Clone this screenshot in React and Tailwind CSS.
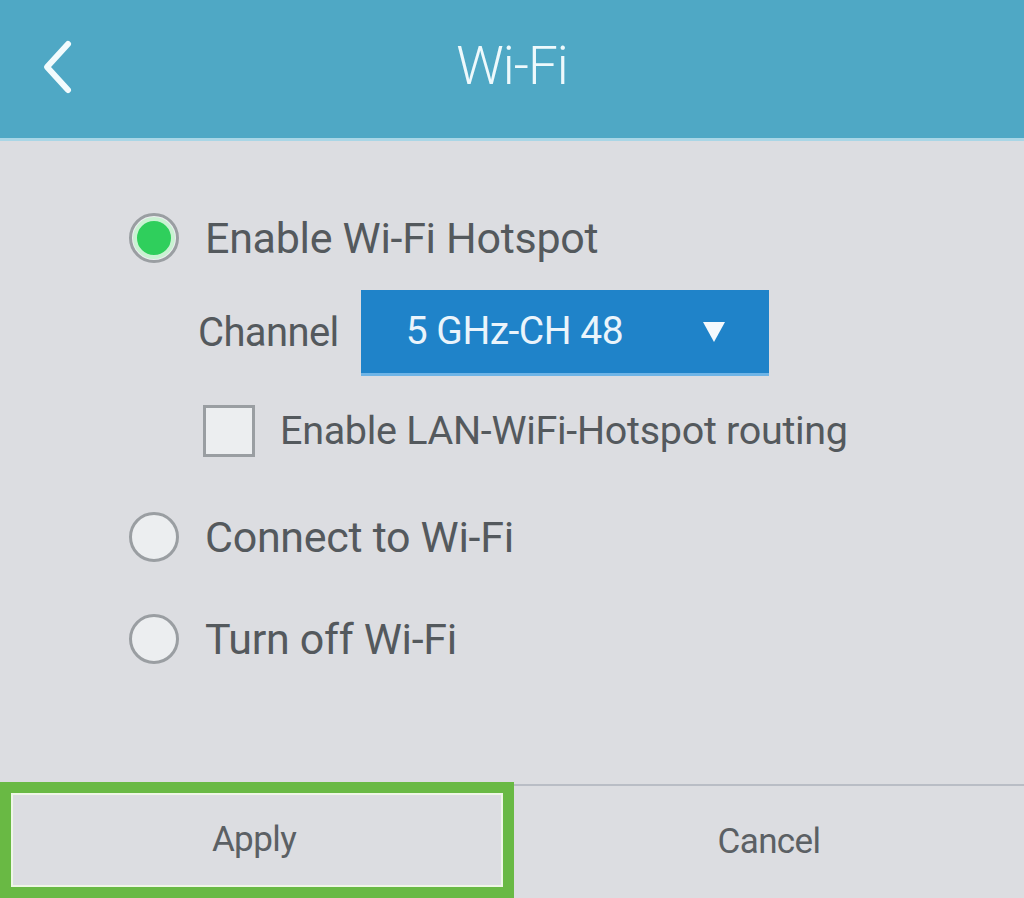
function Radio({ checked, label }) {
  return (
    <div className="flex items-center h-[52px]">
      <div className="w-[50px] h-[50px] rounded-full border-[3px] border-[#9a9ea2] bg-[#eceef0] flex items-center justify-center shrink-0">
        {checked && <div className="w-[34px] h-[34px] rounded-full bg-[#2fcf5c] border-[4px] border-[#c9f2d2] box-content -m-[3px]" />}
      </div>
      <span className="ml-[26px] text-[43px] leading-none text-[#54595d] tracking-[-0.3px]">{label}</span>
    </div>
  )
}

export default function App() {
  return (
    <div className="w-[1024px] h-[898px] bg-[#dcdde1] flex flex-col overflow-hidden" style={{ fontFamily: 'Roboto, "Liberation Sans", sans-serif' }}>
      {/* Header */}
      <div className="h-[141px] bg-[#4fa8c5] relative flex items-center justify-center border-b-[3px] border-[#a9d6e6] shrink-0">
        <svg className="absolute left-[38px] top-[38px]" width="40" height="58" viewBox="0 0 40 58" fill="none">
          <path d="M30 6L9 29L30 52" stroke="#f2fbfd" strokeWidth="6" strokeLinecap="round" strokeLinejoin="round" />
        </svg>
        <span className="text-[53px] leading-none font-light text-[#eef9fc] tracking-[-1px] -mt-[6px]">Wi-Fi</span>
      </div>

      {/* Body */}
      <div className="flex-1 pl-[129px] pt-[71px]">
        <Radio checked label="Enable Wi-Fi Hotspot" />
        <div className="flex items-center mt-[26px] pl-[69px]">
          <span className="text-[40px] leading-none text-[#54595d] tracking-[-0.6px]">Channel</span>
          <div className="ml-[22px] w-[408px] h-[86px] bg-[#1f83c9] border-b-[3px] border-[#6fb4e6] flex items-center justify-between pl-[45px] pr-[44px]">
            <span className="text-[39px] leading-none text-[#eaf4fb] tracking-[-0.5px]">5 GHz-CH 48</span>
            <svg width="22" height="20" viewBox="0 0 22 20"><path d="M0 0H22L11 20Z" fill="#f4f9fd" /></svg>
          </div>
        </div>
        <div className="flex items-center mt-[29px] pl-[74px]">
          <div className="w-[52px] h-[52px] border-[3px] border-[#9a9ea2] bg-[#eceef0] shrink-0" />
          <span className="ml-[25px] text-[39.5px] leading-none text-[#54595d] tracking-[-0.3px]">Enable LAN-WiFi-Hotspot routing</span>
        </div>
        <div className="mt-[54px]">
          <Radio label="Connect to Wi-Fi" />
        </div>
        <div className="mt-[50px]">
          <Radio label="Turn off Wi-Fi" />
        </div>
      </div>

      {/* Footer buttons */}
      <div className="flex h-[116px] shrink-0">
        <div className="w-[514px] border-[11px] border-[#69b944]">
          <div className="h-full border-2 border-[#eef6e6] flex items-center justify-center">
            <span className="text-[35px] text-[#5b6064] tracking-[-0.6px] -ml-[6px]">Apply</span>
          </div>
        </div>
        <div className="flex-1 border-t-2 border-[#b9bdc5] mt-[2px] flex items-center justify-center">
          <span className="text-[35px] text-[#5b6064] tracking-[-0.6px]">Cancel</span>
        </div>
      </div>
    </div>
  )
}
